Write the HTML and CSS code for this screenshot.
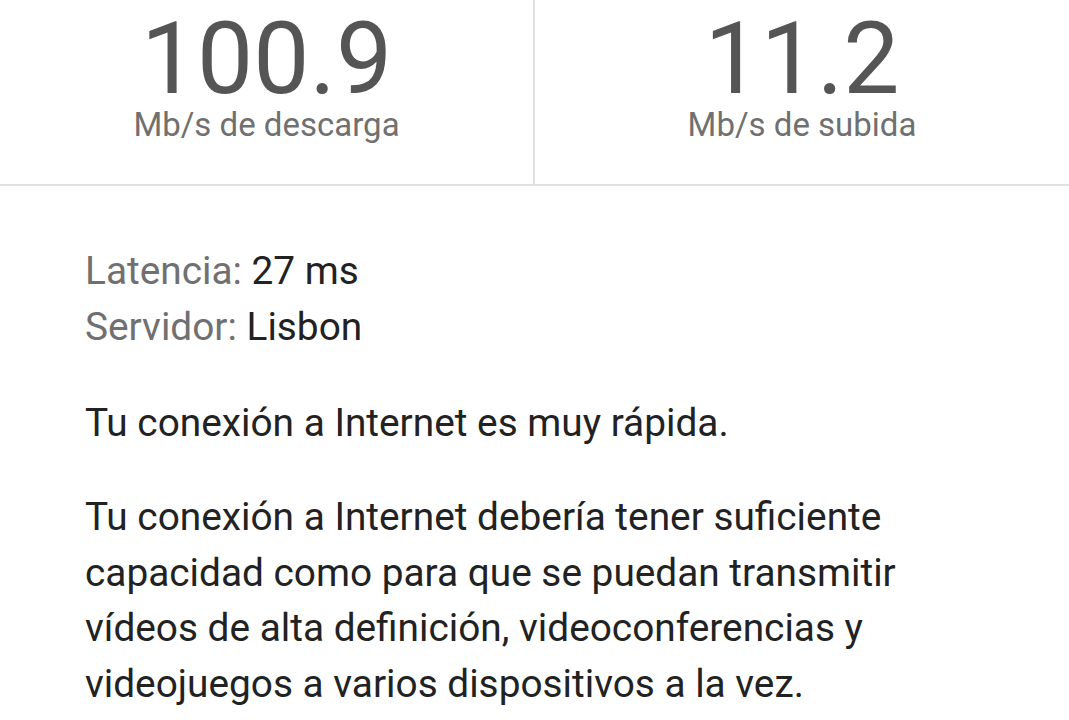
FILE: index.html
```html
<!DOCTYPE html>
<html lang="es">
<head>
    <meta charset="UTF-8">
    <meta name="viewport" content="width=device-width, initial-scale=1.0">
    <title>Prueba de velocidad</title>
    <link rel="stylesheet" href="styles.css">
</head>
<body>

    <div class="results">
        <div class="result">
            <div class="speed">100.9</div>
            <div class="unit">Mb/s de descarga</div>
        </div>
        <div class="result">
            <div class="speed">11.2</div>
            <div class="unit">Mb/s de subida</div>
        </div>
    </div>

    <div class="details">
        <div class="stats">
            <div><span class="label">Latencia:</span> 27 ms</div>
            <div><span class="label">Servidor:</span> Lisbon</div>
        </div>

        <p>Tu conexión a Internet es muy rápida.</p>
        <p>Tu conexión a Internet debería tener suficiente capacidad como para que se puedan transmitir vídeos de alta definición, videoconferencias y videojuegos a varios dispositivos a la vez.</p>
    </div>

</body>
</html>
```

FILE: styles.css
```css
body {
    margin: 0;
    font-family: Roboto, "Noto Sans", sans-serif;
    background-color: #ffffff;
    color: #222222;
}

.results {
    display: grid;
    grid-template-columns: 535px 1fr;
    height: 184px;
    border-bottom: 2px solid #e0e0e0;
}

.result {
    text-align: center;
    padding-top: 11px;
}

.result:first-child {
    border-right: 2px solid #e0e0e0;
}

.speed {
    font-size: 100px;
    line-height: 96px;
    color: #555555;
}

.unit {
    font-size: 33px;
    line-height: 36px;
    color: #707070;
}

.details {
    padding: 57px 85px 0;
    font-size: 38.8px;
    line-height: 55.5px;
}

.stats {
    margin-bottom: 41px;
}

.label {
    color: #707070;
}

p {
    margin: 0 0 38.5px;
    max-width: 840px;
}
```
